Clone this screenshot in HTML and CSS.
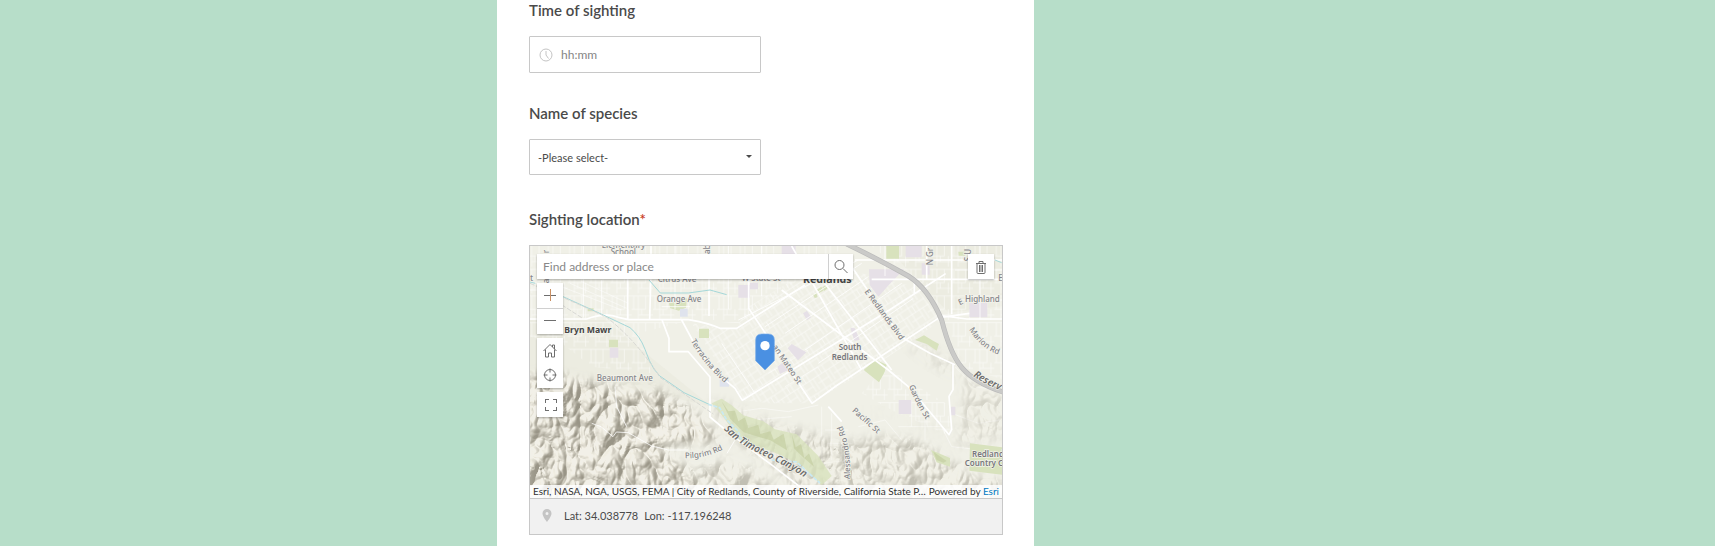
FILE: index.html
```html
<!DOCTYPE html>
<html lang="en">
<head>
<meta charset="utf-8">
<title>Wildlife sighting</title>
<link rel="stylesheet" href="styles.css">
</head>
<body>
<form class="form">
  <div class="field">
    <label class="label" for="time">Time of sighting</label>
    <div class="time">
      <svg class="time-icon" viewBox="0 0 14 14" aria-hidden="true"><circle cx="7" cy="7" r="6"/><path d="M7 3v4l2.500 3.500"/></svg>
      <input class="time-input" id="time" type="text" placeholder="hh:mm">
    </div>
  </div>
  <div class="field">
    <label class="label" for="species">Name of species</label>
    <div class="select">
      <select class="select-input" id="species"><option>-Please select-</option></select>
      <svg class="caret" viewBox="0 0 6 4" aria-hidden="true"><path d="M0 0h6L3 3z"/></svg>
    </div>
  </div>
  <div class="field">
    <label class="label label-map" for="place">Sighting location<span class="required">*</span></label>
    <div class="widget">
      <div class="map">
        <svg class="map-art" viewBox="15 18 1416 756" preserveAspectRatio="xMidYMid slice" role="img" aria-label="Map of Redlands">
          <defs>
            <pattern id="ortho" width="64" height="80" patternUnits="userSpaceOnUse"><path class="street" d="M0 8h64M20 8v72M42 8v40M0 48h42M20 65h44M54 48v32M6 8v40M30 48v17"/></pattern>
            <pattern id="diag" width="56" height="66" patternUnits="userSpaceOnUse" patternTransform="rotate(-33)"><path class="street" d="M0 6h56M0 28h56M0 48h38M12 0v66M38 6v60M25 6v22M50 28v38"/></pattern>
            <filter id="relief" x="0" y="0" width="100%" height="100%" color-interpolation-filters="sRGB">
              <feTurbulence type="turbulence" baseFrequency="0.012 0.008" numOctaves="3" seed="8"/>
              <feColorMatrix values="0 0 0 0 0  0 0 0 0 0  0 0 0 0 0  1 0 0 0 0"/>
              <feGaussianBlur stdDeviation="2"/>
              <feDiffuseLighting surfaceScale="42" lighting-color="#f4f2ea" diffuseConstant="1.200"><feDistantLight azimuth="225" elevation="55"/></feDiffuseLighting>
              <feColorMatrix values=".4 0 0 0 .55  0 .41 0 0 .53  0 0 .44 0 .47  0 0 0 1 0"/>
            </filter>
            <filter id="soft" x="-10%" y="-10%" width="120%" height="120%"><feGaussianBlur stdDeviation="16"/></filter>
            <mask id="hills" maskUnits="userSpaceOnUse" x="15" y="18" width="1416" height="756">
              <path fill="#ddd" filter="url(#soft)" d="M0 400L110 408 250 440 400 452 480 500 545 555 590 600 500 610 400 620 500 700 600 780H0z"/>
              <path fill="#777" filter="url(#soft)" d="M500 690L600 660 700 700 790 780H540zM560 480L640 510 760 560 860 580 960 610 1090 590 1190 610 1330 700 1440 720V790H840L770 700 620 590z"/>
              <path fill="#444" filter="url(#soft)" d="M950 500l160 30 110 30 80 60 140-30V470l-120-70-20 200-220-80z"/>
              <path fill="#333" filter="url(#soft)" d="M1130 310l110 20 60 40v50l-90-50z"/>
            </mask>
            <path id="terracina" d="M497 303Q540 380 612 440"/>
            <path id="blvd" d="M1018 155L1136 316"/>
            <path id="mateo" d="M742 320L830 452"/>
            <path id="marion" d="M1332 268Q1370 330 1428 346"/>
            <path id="reserv" d="M1344 408Q1390 440 1450 460"/>
            <path id="garden" d="M1152 438Q1170 490 1212 554"/>
            <path id="pacific" d="M980 514L1070 593"/>
            <path id="alessandro" d="M974 718Q982 620 944 540"/>
            <path id="timoteo" d="M596 568C660 640 780 660 872 738"/>
            <path id="pilgrim" d="M480 655Q550 655 606 622"/>
          </defs>
          <rect x="15" y="18" width="1416" height="756" fill="#f0f0e7"/>
          <path fill="#e9e9dd" opacity=".6" d="M15 240L240 240 560 500 260 430 15 400zM1080 18h351v180l-160 20z"/>
          <path fill="url(#ortho)" d="M15 18H960L640 250 500 240 340 280 380 400 200 380 110 310 15 290zM1040 18h391v400l-130-40-70-180-80-90zM1080 380l200 120v90l-180-80-90-50z"/>
          <path fill="url(#diag)" d="M670 200L890 70 1170 140 1250 240 1090 350 860 490 730 490 650 480 500 250 630 270z"/>
          <path class="street" fill="none" d="M110 140l180 70M135 130l170 75M170 125l140 65M600 520l110-15 80 10 90-20M680 540l120-10M890 500v170l90-10M900 570h70M905 610h75M920 520v140M950 600v60M1000 560l80-20 50 60M1120 560h130M1160 480v80M1200 490v110M1250 560l30 60 90 10M1290 380l60 60 70 10M1280 520l80 30 65-10M730 400l120-70M780 440l100-60"/>
          <rect x="15" y="18" width="1416" height="756" filter="url(#relief)" mask="url(#hills)"/>
          <g fill="#d8e2bd">
            <path d="M432 190l54-15-3 28-22 9-26-8zM522 266h30v28h-30zM252 299h27v23h-27zM874 150l15-10 6 12-15 8zM892 142l12-8 5 10-12 9zM864 164l10-5 4 13-9 2zM1016 390l35-31 34 15-6 22-17 31zM1170 300l27-14 27 16 18 10-7 20-30-20zM1084 18h38v38h-38zM1300 35h23l-2 12h-20zM1335 610l96 12v82l-98-12zM1218 630l57 24v26l-40-13zM188 205h18v9h-18z"/>
            <path opacity=".8" d="M560 490l30-14 30 20 35 30 60 18 35 24 65 15 65 65 40 60-30 28-60-60-90-42-90-26-50-70z"/>
          </g>
          <g fill="#c2cc9d" opacity=".6"><path d="M590 484l20 30 20-2 10 32 20-12 10 32 30-10 6 28 30-8 10 25 30-18 10 50-50-30-80-24-40-40zM800 580l12 42 16-10 10 42 14-14 15 40-40-35-20-20zM1225 635l40 28-10 5-20-8z"/></g>
          <g fill="#e6e0e7"><path d="M770 18h42v24h-42zM640 135h35v38h-35zM675 128h24v20h-24zM788 325l12-13 44 25-25 24zM757 380l18-14 20 22-30 14zM1032 88h105l-45 46-32 36-26-35zM1142 18h48v34h-48zM1333 188h54v44h-54zM254 323h26v30h-26zM976 263l14 2 14 35-16 2zM834 220l12-8 12 20-12 9zM1121 480h38v42h-38zM1278 500h13v26h-13zM1190 70h24v34h-24z"/><path fill="#dfe3ed" d="M465 206h23v24h-23zM584 420h28v20h-28z"/></g>
          <g class="road">
            <path d="M15 237h170q55-20 95-5l30 7h180q60 10 95 26h50L840 135M308 58v178M552 18v210M378 18v80l-4 140M671 110v95l190 285 72-52 310-205 90-13M861 490l60-43M410 237l22 58v40h58l65 76v120l60 50 120 90 110 85M470 240l40 75 60 80 60 50 22 36 270-165 170-105 170-110M770 150l320 240 60 50 60 70 62 74 8-15-8-100 12-20V370M880 105l220 285M980 80l95 140 60 75 80 45 75 34M1040 118h391M1205 18v100M1280 18v205M100 60h210M990 60h441M1168 110v50M800 18L1010 390M1235 225l90 12h106M910 500l40 45"/>
            <path class="minor" d="M15 150h95M110 175v64M175 18v215M230 120v110M450 18v190M410 200h85M610 18v190M710 18v150M330 18v60h80M640 240L1000 60M720 260l290-190M780 280l250-170M840 330l290-200M880 370l285-195M590 310l100 150M1080 18v90M1365 18v220M1290 90h141M1310 180h121"/>
            <path class="minor" d="M200 550l28 10 36 30 10-14 36 2 70 40 50 12h60M270 440l5 60 30 60M606 640l30-50"/>
          </g>
          <path class="water" d="M15 126l16 4M110 168l125 57 80 38q30 25 45 65 25 75 62 92l55 38 75 35M372 120l34 39h84l65-9 50 14M1410 60l20 8"/>
          <path class="wash" d="M550 493l34 10 20 35 35 35 10 25 40 22M740 660l75 6 30 28 40 35"/>
          <path class="rail" d="M15 130Q180 200 245 232q90 70 160 180l160 110M170 233l-70-45"/>
          <path fill="none" stroke="#bababa" stroke-width="15" d="M965 12Q1065 60 1150 108 1210 145 1250 240 1275 340 1310 382 1350 430 1440 458"/>
          <path fill="none" stroke="#cacac8" stroke-width="11" d="M965 12Q1065 60 1150 108 1210 145 1250 240 1275 340 1310 382 1350 430 1440 458"/>
          <g class="place">
            <text x="230" y="23">Elementary</text><text x="257" y="46">School</text><text x="398" y="125">Citrus Ave</text><text x="650" y="124">W State St</text><text x="395" y="185">Orange Ave</text><text x="215" y="424">Beaumont Ave</text><text x="1320" y="186">Highland</text><text x="1420" y="124">E</text><text x="15" y="122">t</text>
            <text transform="translate(71 55) rotate(-90)">ur</text><text transform="translate(71 130) rotate(-90)">a</text><text transform="translate(555 42) rotate(-90)">ab</text><text transform="translate(1223 76) rotate(-90)">N Gr</text><text transform="translate(1338 64) rotate(-90)">S U</text><text transform="translate(1304 196) rotate(-25)">E</text>
            <text><textPath href="#terracina">Terracina Blvd</textPath></text><text><textPath href="#blvd">E Redlands Blvd</textPath></text><text><textPath href="#mateo">an Mateo St</textPath></text><text><textPath href="#marion">Marion Rd</textPath></text><text><textPath href="#garden">Garden St</textPath></text><text><textPath href="#pacific">Pacific St</textPath></text><text><textPath href="#alessandro">Alessandro Rd</textPath></text><text><textPath href="#pilgrim">Pilgrim Rd</textPath></text>
            <text class="area" x="941" y="331">South</text><text class="area" x="920" y="359">Redlands</text><text class="area" x="1341" y="651">Redlands</text><text class="area" x="1319" y="678">Country Club</text>
            <text class="town" x="118" y="280">Bryn Mawr</text><text class="city" x="834" y="129">Redlands</text>
            <text class="canyon"><textPath href="#timoteo">San Timoteo Canyon</textPath></text><text class="canyon"><textPath href="#reserv">Reserv</textPath></text>
          </g>
          <path fill="#4a90e2" stroke="#75aae9" stroke-width="2" d="M692 300q0-18 18-18h20q18 0 18 18v62l-28 28-28-28z"/><circle cx="720" cy="317" r="14" fill="#fff"/>
        </svg>
        <div class="search">
          <input class="search-input" id="place" type="text" placeholder="Find address or place">
          <button class="search-button" type="button" aria-label="Search"><svg class="icon" viewBox="0 0 16 16"><circle cx="6.500" cy="6" r="4.500"/><path d="M10 9.500l4.500 4.500"/></svg></button>
        </div>
        <button class="tool delete" type="button" aria-label="Delete"><svg class="icon" viewBox="0 0 16 16"><path d="M3 4.500h10M6 4.500v-2h4v2M4 4.500v9q0 1 1 1h6q1 0 1-1v-9M6.500 6v7M8 6v7M9.500 6v7"/></svg></button>
        <div class="tools">
          <div class="group divided">
            <button class="tool" type="button" aria-label="Zoom in"><svg class="icon crisp" viewBox="0 0 16 16"><path d="M2 7h12"/><path class="warm" d="M8 1v12"/></svg></button>
            <button class="tool" type="button" aria-label="Zoom out"><svg class="icon crisp" viewBox="0 0 16 16"><path d="M2 6h12"/></svg></button>
          </div>
          <div class="group">
            <button class="tool" type="button" aria-label="Home"><svg class="icon" viewBox="0 0 16 16"><path d="M1.500 8L8 1.500 14.500 8M3.500 6.500V14h3v-4h3v4h3V6.500M10.500 4V2h2v4"/></svg></button>
            <button class="tool" type="button" aria-label="Find my location"><svg class="icon" viewBox="0 0 16 16"><circle cx="8" cy="7" r="5.500"/><path d="M8 .5v4M8 9.500v4M1.500 7h4M10.500 7h4"/></svg></button>
          </div>
          <div class="group">
            <button class="tool" type="button" aria-label="Full screen"><svg class="icon crisp" viewBox="0 0 16 16"><path d="M6.500 2H3v3.500M10.500 2H14v3.500M3 9.500V13h3.500M14 9.500V13h-3.500"/></svg></button>
          </div>
        </div>
        <div class="credits"><span class="sources">Esri, NASA, NGA, USGS, FEMA | City of Redlands, County of Riverside, California State P…</span><span class="powered">Powered by <a class="link" href="#">Esri</a></span></div>
      </div>
      <div class="coords">
        <svg class="pin" viewBox="0 0 10 13" aria-hidden="true"><path fill-rule="evenodd" d="M5 0a4.500 4.500 0 0 1 4.500 4.500C9.500 7.500 5 13 5 13S.5 7.500.5 4.500A4.500 4.500 0 0 1 5 0zm0 3a1.500 1.500 0 1 0 0 3 1.500 1.500 0 0 0 0-3z"/></svg>
        <span>Lat: 34.038778</span><span class="lon">Lon: -117.196248</span>
      </div>
    </div>
  </div>
</form>
</body>
</html>
```
FILE: styles.css
```css
* { box-sizing: border-box; }
body {
  margin: 0;
  min-height: 100vh;
  display: grid;
  grid-template-columns: 497fr 537fr 681fr;
  background: #b7dec9;
  color: #4a4a4a;
  font-family: Lato, "Open Sans", sans-serif;
  font-size: 12px;
}
input, select, button { font: inherit; color: inherit; margin: 0; padding: 0; border: 0; border-radius: 0; background: none; outline: 0; }
.form {
  grid-column: 2;
  display: flex;
  flex-direction: column;
  gap: 30px;
  padding: 0 31px 11px 32px;
  background: #fff;
  overflow: hidden;
}
.field { display: flex; flex-direction: column; align-items: flex-start; gap: 15px; }
.label { font-size: 15px; font-weight: 600; line-height: 21px; }
.label-map { padding-top: 4px; }
.required { color: #c83a1e; }
.time, .select { position: relative; display: flex; align-items: center; width: 49%; height: 36px; border: 1px solid #c8c8c8; border-radius: 1px; }
.time { height: 37px; padding-left: 9px; gap: 8px; }
.time-icon { width: 14px; height: 14px; fill: none; stroke: #c4c4c4; }
.time-input { flex: 1; min-width: 0; height: 100%; }
.time-input::placeholder { color: #858585; opacity: 1; }
.select-input { width: 100%; height: 100%; padding-left: 8px; appearance: none; font-size: 11px; }
.caret { position: absolute; right: 8px; width: 6px; height: 4px; fill: #4a4a4a; pointer-events: none; }
.widget { width: 100%; border: 1px solid #c8c8c8; }
.map { position: relative; overflow: hidden; }
.map-art { display: block; width: 100%; height: 252px; }
.street { stroke: #fff; stroke-width: 2; opacity: .7; }
.road { fill: none; stroke: #fff; stroke-width: 5; stroke-linejoin: round; }
.minor { stroke-width: 3; opacity: .8; }
.water { fill: none; stroke: #a5d8d9; stroke-width: 3; }
.wash { fill: none; stroke: #c9e9f3; stroke-width: 5; stroke-dasharray: 12 4; }
.rail { fill: none; stroke: #d8d8d4; stroke-width: 3; stroke-dasharray: 14 5; }
.place { font-family: "Noto Sans", sans-serif; font-size: 24px; font-weight: 500; fill: #85858a; stroke: #f3f3eb; stroke-width: 4; paint-order: stroke; }
.area { font-weight: 600; fill: #77777b; }
.town { font-size: 26px; font-weight: 700; fill: #454545; }
.city { font-size: 32px; font-weight: 700; fill: #454545; }
.canyon { font-size: 30px; font-weight: 600; font-style: italic; fill: #6c6c6c; }
.search { position: absolute; left: 7px; top: 8px; width: 67%; height: 25px; display: flex; background: #fff; box-shadow: 0 1px 2px #0000004d; }
.search-input { flex: 1; min-width: 0; padding-left: 6px; }
.search-input::placeholder { color: #888; opacity: 1; }
.search-button { display: grid; place-items: center; width: 25px; border-left: 1px solid #d0d0d0; }
.icon { width: 16px; height: 16px; fill: none; stroke: #6e6e6e; }
.crisp { shape-rendering: crispEdges; }
.warm { stroke: #c98f63; }
.tools { position: absolute; left: 7px; top: 37px; display: flex; flex-direction: column; gap: 4px; }
.group { display: flex; flex-direction: column; background: #fff; box-shadow: 0 1px 2px #0000004d; }
.divided { gap: 1px; background: #d0d0d0; }
.tool { display: grid; place-items: center; width: 26px; height: 25px; background: #fff; }
.delete { position: absolute; right: 8px; top: 8px; box-shadow: 0 1px 2px #0000004d; }
.credits { position: absolute; left: 0; right: 0; bottom: 0; display: flex; justify-content: space-between; padding: 0 3px; font-size: 10px; line-height: 13px; color: #323232; background: #ffffffd9; }
.sources { flex: 1; min-width: 0; overflow: hidden; white-space: nowrap; text-overflow: ellipsis; }
.powered { white-space: nowrap; }
.link { color: #0079c1; text-decoration: none; }
.coords { display: flex; align-items: center; height: 36px; padding: 0 12px 2px; border-top: 1px solid #c8c8c8; background: #f1f1f1; font-size: 11px; }
.pin { width: 10px; height: 13px; margin-right: 12px; fill: #c4c4c4; }
.lon { margin-left: 6px; }
```
